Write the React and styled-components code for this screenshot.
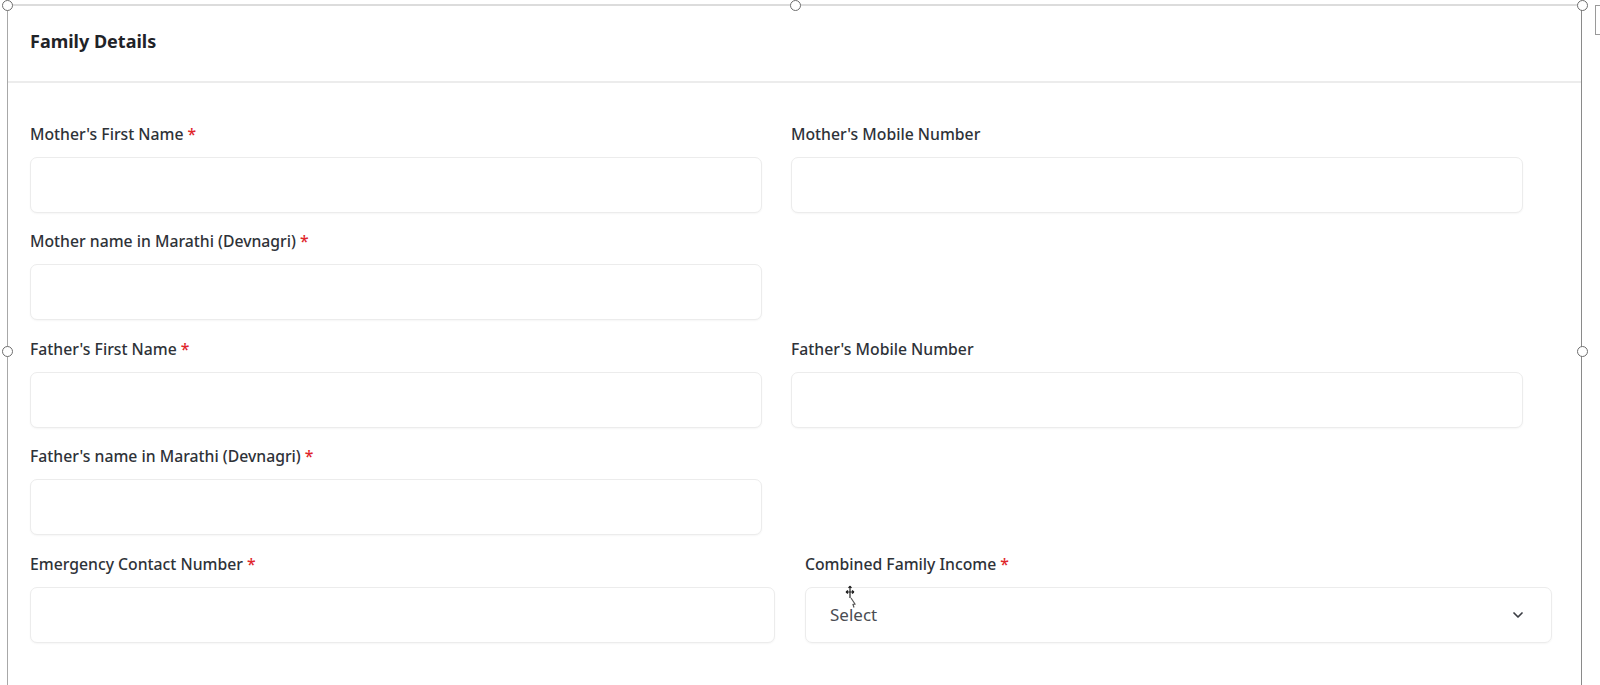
import React from 'react';
import styled, { createGlobalStyle } from 'styled-components';

const GlobalStyle = createGlobalStyle`
  html, body {
    margin: 0;
    padding: 0;
    background: #ffffff;
    font-family: "Noto Sans", "Liberation Sans", sans-serif;
    overflow: hidden;
  }
`;

const Page = styled.div`
  position: relative;
  width: 1600px;
  height: 685px;
  padding: 4px 0 0 7px;
  box-sizing: border-box;
`;

const Card = styled.div`
  position: relative;
  width: 1575px;
  height: 681px;
  box-sizing: border-box;
  border-top: 2px solid #dcdcdc;
  border-left: 1px solid #a8a8a8;
  border-right: 1px solid #8a8a8a;
  background: #fff;
`;

const Header = styled.div`
  height: 77px;
  display: flex;
  align-items: center;
  padding: 0 22px 6px;
  border-bottom: 2px solid #ececec;
  box-sizing: border-box;
`;

const Title = styled.h2`
  margin: 0;
  font-size: 18px;
  font-weight: 700;
  color: #1f2328;
`;

const Body = styled.div`
  padding: 40.5px 0 0 22px;
`;

const Row = styled.div`
  display: grid;
  grid-template-columns: ${(p) => p.$cols || '732px 732px'};
  column-gap: ${(p) => p.$gap || '29px'};
`;

const Field = styled.div`
  display: flex;
  flex-direction: column;
  padding-bottom: 18.5px;
`;

const Label = styled.label`
  height: 20px;
  line-height: 20px;
  font-size: 15.75px;
  font-weight: 500;
  color: #2e3238;
  margin-bottom: 13px;
  white-space: nowrap;
`;

const Star = styled.span`
  color: #e0262b;
  margin-left: 4px;
`;

const Input = styled.input`
  height: 56px;
  box-sizing: border-box;
  border: 1px solid #ececec;
  border-radius: 7px;
  box-shadow: 0 1px 2px rgba(0, 0, 0, 0.04);
  background: #fff;
  outline: none;
  padding: 0 16px;
  font: inherit;
`;

const SelectBox = styled.div`
  height: 56px;
  box-sizing: border-box;
  border: 1px solid #ececec;
  border-radius: 7px;
  box-shadow: 0 1px 2px rgba(0, 0, 0, 0.04);
  display: flex;
  align-items: center;
  justify-content: space-between;
  padding: 0 25px 0 24px;
  font-size: 17px;
  color: #4a4d52;
`;

const Handle = styled.span`
  position: absolute;
  width: 11px;
  height: 11px;
  border-radius: 50%;
  border: 1.6px solid #6e6e6e;
  background: #fff;
  box-sizing: border-box;
  left: ${(p) => p.$x - 5.5}px;
  top: ${(p) => p.$y - 5.5}px;
`;

const SideTab = styled.span`
  position: absolute;
  left: 1595px;
  top: 5px;
  width: 12px;
  height: 30px;
  border: 1px solid #9a9a9a;
  box-sizing: border-box;
`;

const Cursor = styled.svg`
  position: absolute;
  left: 842px;
  top: 585px;
`;

const Chevron = () => (
  <svg width="16" height="16" viewBox="0 0 24 24" fill="none" stroke="#3b3e44" strokeWidth="2.6" strokeLinecap="round" strokeLinejoin="round">
    <path d="M6 9l6 6 6-6" />
  </svg>
);

const TextField = ({ label, required }) => (
  <Field>
    <Label>
      {label}
      {required && <Star>*</Star>}
    </Label>
    <Input type="text" />
  </Field>
);

export default function App() {
  return (
    <>
      <GlobalStyle />
      <Page>
        <Card>
          <Header>
            <Title>Family Details</Title>
          </Header>
          <Body>
            <Row>
              <TextField label="Mother's First Name" required />
              <TextField label="Mother's Mobile Number" />
            </Row>
            <Row>
              <TextField label="Mother name in Marathi (Devnagri)" required />
            </Row>
            <Row>
              <TextField label="Father's First Name" required />
              <TextField label="Father's Mobile Number" />
            </Row>
            <Row>
              <TextField label="Father's name in Marathi (Devnagri)" required />
            </Row>
            <Row $cols="745px 747px" $gap="30px">
              <TextField label="Emergency Contact Number" required />
              <Field>
                <Label>
                  Combined Family Income<Star>*</Star>
                </Label>
                <SelectBox>
                  <span>Select</span>
                  <Chevron />
                </SelectBox>
              </Field>
            </Row>
          </Body>
        </Card>
        <Handle $x={7} $y={5} />
        <Handle $x={795} $y={5} />
        <Handle $x={1582} $y={5} />
        <Handle $x={7} $y={351} />
        <Handle $x={1582} $y={351} />
        <SideTab />
        <Cursor width="16" height="24" viewBox="0 0 16 24" fill="none" stroke="#222" strokeWidth="1.2">
          <path d="M8 1v12M4 7h8M8 1l-1.5 2M8 1l1.5 2M4 7l2-1.5M4 7l2 1.5M12 7l-2-1.5M12 7l-2 1.5" />
          <path d="M9 13l4 6-2 .5 1 3" stroke="#555" />
        </Cursor>
      </Page>
    </>
  );
}
